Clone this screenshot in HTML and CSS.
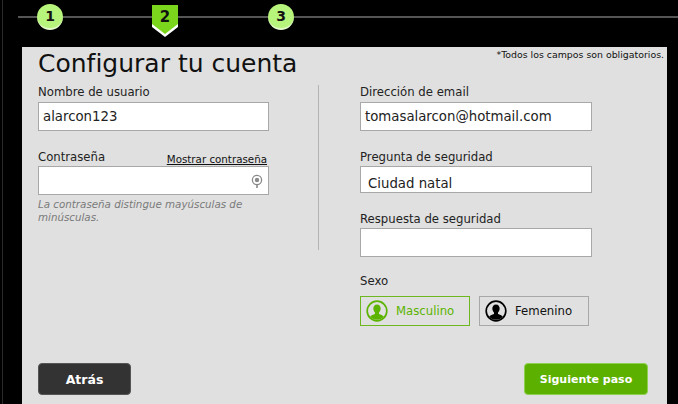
FILE: index.html
```html
<!DOCTYPE html>
<html lang="es">
<head>
<meta charset="utf-8">
<title>Configurar tu cuenta</title>
<link rel="stylesheet" href="styles.css">
</head>
<body>
<div class="page">
  <nav class="steps">
    <span class="step step-1">1</span>
    <span class="step-current">
      <svg class="flag" width="26" height="32" viewBox="0 0 26 32"><path d="M0 0H26V22L13 32L0 22Z" fill="#fff"/><path d="M0 0H26V19L13 29L0 19Z" fill="#7bd51c"/></svg>
      <span class="flag-num">2</span>
    </span>
    <span class="step step-3">3</span>
  </nav>
  <main class="panel">
    <p class="required">*Todos los campos son obligatorios.</p>
    <h1>Configurar tu cuenta</h1>
    <div class="columns">
      <section class="col col-left">
        <div class="field">
          <label>Nombre de usuario</label>
          <div class="input">alarcon123</div>
        </div>
        <div class="field field-pass">
          <div class="label-row"><label>Contraseña</label><a class="show">Mostrar contraseña</a></div>
          <div class="input input-pass">
            <svg width="12" height="14" viewBox="0 0 12 14"><circle cx="6" cy="6" r="4.600" fill="none" stroke="#8a8a8a" stroke-width="1.300"/><circle cx="6" cy="6" r="2.200" fill="#8a8a8a"/><path d="M6 10V14" stroke="#8a8a8a" stroke-width="1.600"/></svg>
          </div>
          <p class="hint">La contraseña distingue mayúsculas de minúsculas.</p>
        </div>
      </section>
      <section class="col col-right">
        <div class="field">
          <label>Dirección de email</label>
          <div class="input">tomasalarcon@hotmail.com</div>
        </div>
        <div class="field f2">
          <label>Pregunta de seguridad</label>
          <div class="input input-select">Ciudad natal</div>
        </div>
        <div class="field f3">
          <label>Respuesta de seguridad</label>
          <div class="input input-tall"></div>
        </div>
        <div class="field f4">
          <label>Sexo</label>
          <div class="genders">
            <div class="gender gender-on">
              <svg width="22" height="22" viewBox="0 0 24 24"><circle cx="12" cy="12" r="10.700" fill="none" stroke="#5cb300" stroke-width="1.800"/><path d="M12 5c2.600 0 4 2 4 4.400 0 1.800-.8 3.300-1.800 4.200v1.700c2 .8 4 1.400 5.300 2.700A10 10 0 0 1 12 21.500 10 10 0 0 1 4.500 18c1.300-1.300 3.300-1.900 5.300-2.700v-1.700C8.800 12.700 8 11.200 8 9.400 8 7 9.400 5 12 5z" fill="#5cb300"/></svg>
              <span>Masculino</span>
            </div>
            <div class="gender">
              <svg width="22" height="22" viewBox="0 0 24 24"><circle cx="12" cy="12" r="10.700" fill="#e0e0e0" stroke="#000" stroke-width="1.800"/><path d="M12 5c2.600 0 4 2 4 4.400 0 1.800-.8 3.300-1.800 4.200v1.700c2 .8 4 1.400 5.300 2.700A10 10 0 0 1 12 21.500 10 10 0 0 1 4.500 18c1.300-1.300 3.300-1.900 5.300-2.700v-1.700C8.800 12.700 8 11.200 8 9.400 8 7 9.400 5 12 5z" fill="#000"/></svg>
              <span>Femenino</span>
            </div>
          </div>
        </div>
      </section>
    </div>
    <footer class="actions">
      <button class="btn btn-back">Atrás</button>
      <button class="btn btn-next">Siguiente paso</button>
    </footer>
  </main>
</div>
</body>
</html>
```
FILE: styles.css
```css
* { box-sizing: border-box; }
html, body { margin: 0; padding: 0; height: 100%; }
body { background: #000; font-family: "DejaVu Sans", sans-serif; color: #111; overflow: hidden; }
.page { width: 678px; height: 404px; padding-left: 22px; display: flex; flex-direction: column; position: relative; }
.page::before { content: ""; position: absolute; left: 2px; top: 0; bottom: 0; width: 1px; background: #2a2a2a; }
.steps { height: 47px; position: relative; display: flex; align-items: flex-start; margin-left: -4px; }
.steps::before { content: ""; position: absolute; left: 0; right: 0; top: 16px; height: 2px; background: #555; }
.step { position: relative; width: 26px; height: 26px; margin-top: 4px; border-radius: 50%; background: #b7f47c; border-bottom: 2px solid #e4fbcc; color: #111; font-weight: 700; font-size: 14px; display: flex; align-items: center; justify-content: center; }
.step-1 { margin-left: 19px; }
.step-current { position: relative; width: 26px; height: 33px; margin-left: 89px; margin-top: 5px; display: flex; justify-content: center; }
.flag { position: absolute; left: 0; top: 0; }
.flag-num { position: relative; font-weight: 700; font-size: 15px; line-height: 18px; margin-top: 3px; color: #111; }
.step-3 { margin-left: 90px; }
.panel { flex: 1; width: 645px; background: #e0e0e0; padding: 0 19px 0 16px; position: relative; min-height: 0; }
.required { position: absolute; right: 3px; top: 2px; margin: 0; font-size: 9.400px; color: #111; }
h1 { margin: 0; padding-top: 1px; font-weight: 400; font-size: 25px; line-height: 31px; color: #111; }
.columns { display: grid; grid-template-columns: 281px 1fr; }
.col-left { padding-right: 49px; border-right: 1px solid #b4b4b4; height: 165px; margin-top: 6px; }
.col-right { padding-left: 41px; width: 273px; margin-top: 6px; }
label { display: block; font-size: 11.700px; line-height: 15px; color: #222; }
.input { margin-top: 2px; width: 232px; height: 29px; background: #fff; border: 1px solid #a8a8a8; font-size: 13.300px; line-height: 27px; padding-left: 4px; color: #222; }
.col-left .input { width: 231px; }
.input-pass { display: flex; align-items: center; justify-content: flex-end; padding-right: 5px; margin-top: 1px; }
.input-select { height: 27px; padding-left: 7px; line-height: 34px; margin-top: 1px; overflow: hidden; }
.input-tall { height: 29px; margin-top: 1px; }
.field-pass { margin-top: 19px; }
.label-row { display: flex; justify-content: space-between; align-items: flex-end; width: 229px; }
.show { font-size: 10.300px; line-height: 12px; text-decoration: underline; color: #111; }
.hint { margin: 3px 0 0; font-size: 10.300px; line-height: 13px; font-style: italic; color: #7a7a7a; width: 232px; }
.f2 { margin-top: 19px; }
.f3 { margin-top: 19px; }
.f4 { margin-top: 17px; }
.genders { display: flex; gap: 9px; margin-top: 7px; }
.gender { width: 110px; height: 30px; border: 1px solid #a8a8a8; display: flex; align-items: center; gap: 8px; padding-left: 5px; font-size: 11.700px; color: #111; }
.gender-on { border: 1px solid #6cb81e; color: #5cb300; }
.actions { position: absolute; left: 16px; right: 19px; top: 316px; display: flex; justify-content: space-between; }
.btn { height: 32px; border: 1px solid #555; border-radius: 4px; font-family: inherit; font-weight: 700; font-size: 12.500px; color: #fff; padding: 0; }
.btn-back { width: 93px; background: #333; }
.btn-next { width: 124px; background: #5cb000; border-color: #8fcf50; font-size: 11px; }
```
